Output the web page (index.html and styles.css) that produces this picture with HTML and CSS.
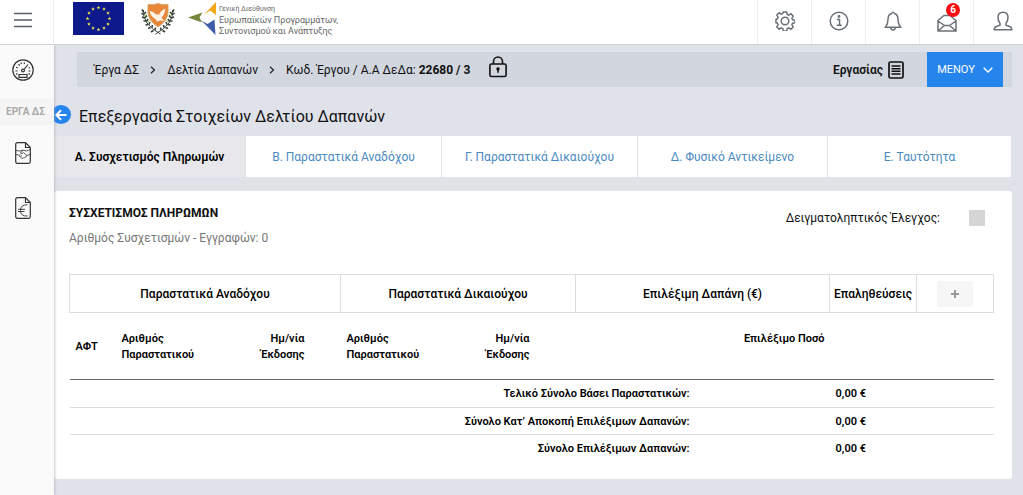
FILE: index.html
```html
<!DOCTYPE html>
<html lang="el">
<head>
<meta charset="utf-8">
<title>Επεξεργασία Στοιχείων Δελτίου Δαπανών</title>
<link rel="stylesheet" href="styles.css">
</head>
<body>
<header class="topbar">
  <button class="burger" aria-label="Μενού πλοήγησης">
    <svg width="18" height="16" viewBox="0 0 18 16"><path d="M0 1.500h18M0 8h18M0 14.500h18" stroke="#5a6068" stroke-width="1.700" fill="none"/></svg>
  </button>
  <div class="brands">
    <svg class="flag" width="51" height="33" viewBox="0 0 51 33">
      <defs><path id="star" fill="#f5ea4b" d="M0-2 .5-.6H1.900L.8.300 1.200 1.700 0 .8-1.200 1.700-.8.300-1.900-.6H-.5z"/></defs>
      <rect width="51" height="33" fill="#0e1a8c"/>
      <use href="#star" x="25.500" y="5.500"/><use href="#star" x="31" y="7"/><use href="#star" x="35" y="11"/>
      <use href="#star" x="36.500" y="16.500"/><use href="#star" x="35" y="22"/><use href="#star" x="31" y="26"/>
      <use href="#star" x="25.500" y="27.500"/><use href="#star" x="20" y="26"/><use href="#star" x="16" y="22"/>
      <use href="#star" x="14.500" y="16.500"/><use href="#star" x="16" y="11"/><use href="#star" x="20" y="7"/>
    </svg>
    <svg class="emblem" width="34" height="33" viewBox="0 0 34 33">
      <path d="M7 1.500Q12 2.500 17 .5 22 2.500 27 1.500V10Q26 18 17 24 8 18 7 10z" fill="#e8873a" stroke="#d5a368" stroke-width="1"/>
      <path d="M8.500 8Q12 8 15 11.500 17 11 18 12 19 8 24.500 5.500 24 11 20.500 14.500L23 18 19 17.500 16 18.500 14.500 16Q10 14 8.500 8z" fill="#fff3e5"/>
      <g fill="none" stroke="#39453b" stroke-width="1">
        <path d="M2.500 7Q1 21 19.500 31M31.500 7Q33 21 14.500 31"/>
        <path stroke-width="1.600" d="M2.500 9 1 6.500M3 12 .5 10M3.500 15 1 14M5 18 2.500 18M7 21.500 4.500 22M9.500 24.500 7 25.500M12.500 27.500 10 29M3 11 5 9M4 15 6 12.500M5.500 18.500 7 16M8 21.500 9 19M11 24.500 11.500 22M14 27 14.500 24.500M31.500 9 33 6.500M31 12 33.500 10M30.500 15 33 14M29 18 31.500 18M27 21.500 29.500 22M24.500 24.500 27 25.500M21.500 27.500 24 29M31 11 29 9M30 15 28 12.500M28.500 18.500 27 16M26 21.500 25 19M23 24.500 22.500 22M20 27 19.500 24.500"/>
      </g>
      <path d="M4 13.500 5.500 11M7 19l1.500-2M30 13.500 28.500 11M27 19l-1.500-2" stroke="#b7c75c" stroke-width="1"/>
    </svg>
    <div class="agency">
      <svg width="29" height="34" viewBox="0 0 29 34">
        <path d="M28 0V13L22 8.500 15.500 13z" fill="#f3a81c"/>
        <path d="M0 15.500 14.500 10.500 11.500 15.500 14 20.500z" fill="#75853c"/>
        <path d="M13.500 18.500 19.500 22 26.500 17.500 27.500 33z" fill="#3d5ba9"/>
      </svg>
      <p class="agency-name"><small>Γενική Διεύθυνση</small><br>Ευρωπαϊκών Προγραμμάτων,<br>Συντονισμού και Ανάπτυξης</p>
    </div>
  </div>
  <nav class="tools" aria-label="Εργαλεία">
    <button class="tool" aria-label="Ρυθμίσεις">
      <svg width="20" height="20" viewBox="0 0 20 20" class="line"><path d="M8.300 1h3.400l.5 2.400 1.600.7 2.100-1.300 2.300 2.300-1.300 2.100.7 1.600 2.400.5v2.400l-2.400.5-.7 1.600 1.300 2.100-2.300 2.300-2.100-1.300-1.600.7-.5 2.400H8.300l-.5-2.400-1.600-.7-2.100 1.300-2.300-2.300 1.300-2.100-.7-1.600L1 11.700V8.300l1.400-.5.700-1.600-1.300-2.100 2.300-2.300 2.100 1.300 1.600-.7z"/><circle cx="10" cy="10" r="3.800"/></svg>
    </button>
    <button class="tool" aria-label="Πληροφορίες">
      <svg width="20" height="20" viewBox="0 0 20 20" class="line"><circle cx="10" cy="10" r="8.800"/><path d="M8 8.500h2.500V14M7.700 14.200h5"/><circle cx="10" cy="5.500" r=".7" fill="#6b7178"/></svg>
    </button>
    <button class="tool" aria-label="Ειδοποιήσεις">
      <svg width="18" height="20" viewBox="0 0 18 20" class="line"><path d="M1.500 16.300Q4 13 4 8.500 4 3.500 7.500 2.500 9-.2 10.500 2.500 14 3.500 14 8.500 14 13 16.500 16.300zM6.800 16.500Q7 19 9 19T11.200 16.500"/></svg>
    </button>
    <button class="tool" aria-label="Μηνύματα">
      <svg width="20" height="18" viewBox="0 0 20 18" class="line mail"><path d="M1 6.500 7 1.500h6l6 5V17H1zM1 7l6.500 4.500h5L19 7M1 17l6.500-5.500M19 17l-6.500-5.500"/></svg>
      <span class="badge">6</span>
    </button>
    <button class="tool" aria-label="Λογαριασμός">
      <svg width="20" height="20" viewBox="0 0 20 20" class="line"><path d="M1.200 18.700q0-2.700 2.800-3.400l3-1v-2Q5 10 5 6.500 5 1.200 10 1.200t5 5.300q0 3.500-2 5.800v2l3 1q2.800.7 2.800 3.400z"/></svg>
    </button>
  </nav>
</header>
<div class="shell">
  <aside class="sidebar">
    <a href="#" class="side-link" aria-label="Πίνακας ελέγχου">
      <svg width="22" height="22" viewBox="0 0 22 22" class="ink"><circle cx="11" cy="11" r="10.200"/><path d="M3.500 12H5.500M4.200 8.200l1.500.7M6.500 5.200l1.200 1.300M9 3.600l.4 1.500M12.500 3.500l-.3 1.500M18.500 12h-2M18 8.500l-1.300.5M4 15.200l1.500-.6M18 15.200l-1.500-.6M12 10.500 16 5.500M7 15.500h8v2.800H7z"/><circle cx="11" cy="11.500" r="1.400"/></svg>
    </a>
    <h2 class="side-title">ΕΡΓΑ ΔΣ</h2>
    <a href="#" class="side-link" aria-label="Συμβάσεις">
      <svg width="16" height="22" viewBox="0 0 16 22" class="ink"><path d="M2.500.7H10.500L15.300 5.500V19.500q0 1.800-1.800 1.800H2.500q-1.800 0-1.800-1.800V2.500Q.7.7 2.500.7zM10.500.7V5.500h4.800"/><path stroke-width=".8" d="M.8 8.500 5 9l3-.8 3.500.8 3.700-1.500M1 12.500l2 .3 3.500 3.200q1.500.7 2-.2 1.500.3 1.800-.8 1.500 0 1.400-1.400L15 12.500M8 8.200 5.500 11q1.500 1.500 3-.5l3.300 3M4 13.500l1.500-1.200M5.500 14.800 7 13.500"/></svg>
    </a>
    <a href="#" class="side-link" aria-label="Δαπάνες">
      <svg width="16" height="22" viewBox="0 0 16 22" class="ink"><path d="M2.500.7H10.500L15.300 5.500V19.500q0 1.800-1.800 1.800H2.500q-1.800 0-1.800-1.800V2.500Q.7.7 2.500.7zM10.500.7V5.500h4.800"/><path stroke-width=".9" d="M12.500 7.800Q5.500 7.500 5.500 13.500T12.500 19M3 12.300h7M3 14.500h6.500"/></svg>
    </a>
  </aside>
  <main class="content">
    <div class="crumbbar">
      <nav class="crumbs" aria-label="Διαδρομή">
        <a href="#">Έργα ΔΣ</a>
        <svg width="6" height="8" viewBox="0 0 6 8"><path d="M1 .8 4.500 4 1 7.200" fill="none" stroke="#222" stroke-width="1.200"/></svg>
        <a href="#">Δελτία Δαπανών</a>
        <svg width="6" height="8" viewBox="0 0 6 8"><path d="M1 .8 4.500 4 1 7.200" fill="none" stroke="#222" stroke-width="1.200"/></svg>
        <span>Κωδ. Έργου / Α.Α ΔεΔα: <b>22680 / 3</b></span>
        <svg class="lock" width="18" height="22" viewBox="0 0 18 22"><rect x=".9" y="8" width="16.200" height="12.500" rx="1.500" fill="none" stroke="#111" stroke-width="1.600"/><path d="M4.500 8V5.500a4.500 4.500 0 0 1 9 0V8" fill="none" stroke="#111" stroke-width="1.600"/><path d="M9 11.200a1.700 1.700 0 0 1 .8 3.200V16.800H8.200V14.400A1.700 1.700 0 0 1 9 11.200z" fill="#111"/></svg>
      </nav>
      <a href="#" class="tasks">Εργασίας
        <svg width="16" height="18" viewBox="0 0 16 18"><rect x="1" y="1" width="14" height="16" rx="1.500" fill="none" stroke="#111" stroke-width="1.700"/><path d="M3.500 5h9M3.500 7.700h9M3.500 10.300h9M3.500 13h9" stroke="#111" stroke-width="1.600"/></svg>
      </a>
      <button class="menu">ΜΕΝΟΥ
        <svg width="10" height="6" viewBox="0 0 10 6"><path d="M.7.8 5 5 9.300.8" fill="none" stroke="#fff" stroke-width="1.400"/></svg>
      </button>
    </div>
    <div class="heading">
      <a href="#" class="back" aria-label="Πίσω"><svg width="12" height="12" viewBox="0 0 12 12"><path d="M11.500 6H1.500M6 1.300 1.300 6 6 10.700" fill="none" stroke="#fff" stroke-width="2"/></svg></a>
      <h1>Επεξεργασία Στοιχείων Δελτίου Δαπανών</h1>
    </div>
    <nav class="tabs" aria-label="Καρτέλες">
      <a href="#" class="tab active" aria-current="page">Α. Συσχετισμός Πληρωμών</a>
      <a href="#" class="tab">Β. Παραστατικά Αναδόχου</a>
      <a href="#" class="tab">Γ. Παραστατικά Δικαιούχου</a>
      <a href="#" class="tab">Δ. Φυσικό Αντικείμενο</a>
      <a href="#" class="tab">Ε. Ταυτότητα</a>
    </nav>
    <section class="card">
      <div class="card-head">
        <div>
          <h2>ΣΥΣΧΕΤΙΣΜΟΣ ΠΛΗΡΩΜΩΝ</h2>
          <p>Αριθμός Συσχετισμών - Εγγραφών: 0</p>
        </div>
        <div class="check">
          <label for="sample">Δειγματοληπτικός Έλεγχος:</label>
          <input type="checkbox" id="sample" disabled>
        </div>
      </div>
      <table class="grid">
        <colgroup><col class="c-aft"><col class="c-num"><col class="c-date"><col class="c-gap"><col class="c-num"><col class="c-date"><col class="c-gap2"><col class="c-sum"><col class="c-amount"><col class="c-ver"><col class="c-add"></colgroup>
        <thead>
          <tr class="groups">
            <th colspan="4">Παραστατικά Αναδόχου</th>
            <th colspan="3">Παραστατικά Δικαιούχου</th>
            <th colspan="2">Επιλέξιμη Δαπάνη (€)</th>
            <th>Επαληθεύσεις</th>
            <th><button class="add" aria-label="Προσθήκη"><svg width="8" height="8" viewBox="0 0 8 8"><path d="M4 0v8M0 4h8" stroke="#999" stroke-width="2"/></svg></button></th>
          </tr>
          <tr class="fields">
            <th class="mid">ΑΦΤ</th>
            <th>Αριθμός Παραστατικού</th>
            <th class="num">Ημ/νία Έκδοσης</th>
            <th></th>
            <th>Αριθμός Παραστατικού</th>
            <th class="num">Ημ/νία Έκδοσης</th>
            <th></th>
            <th></th>
            <th class="num">Επιλέξιμο Ποσό</th>
            <th></th>
            <th></th>
          </tr>
        </thead>
        <tbody>
          <tr><th colspan="8" scope="row">Τελικό Σύνολο Βάσει Παραστατικών:</th><td></td><td>0,00 €</td><td></td></tr>
          <tr><th colspan="8" scope="row">Σύνολο Κατ’ Αποκοπή Επιλέξιμων Δαπανών:</th><td></td><td>0,00 €</td><td></td></tr>
          <tr><th colspan="8" scope="row">Σύνολο Επιλέξιμων Δαπανών:</th><td></td><td>0,00 €</td><td></td></tr>
        </tbody>
      </table>
    </section>
  </main>
</div>
</body>
</html>
```
FILE: styles.css
```css
* { box-sizing: border-box; }
body { margin: 0; min-height: 100vh; display: flex; flex-direction: column; background: #e0e2ea; color: #111; font: 12px/16px Roboto, "Noto Sans", sans-serif; }
a { color: inherit; text-decoration: none; }
button { font: inherit; border: 0; padding: 0; background: none; cursor: pointer; }
h1, h2, p { margin: 0; }
svg { display: block; flex: none; }

.topbar { display: flex; height: 45px; background: #fff; border-bottom: 1px solid #cdcfd4; overflow: hidden; }
.burger { flex: none; width: 54px; padding: 0 14px 5px; border-right: 1px solid #eee; display: flex; align-items: center; }
.brands { display: flex; align-items: flex-start; flex: 1; padding: 2px 0 0 19px; }
.emblem { margin: 1px 0 0 17px; }
.agency { display: flex; gap: 2px; margin-left: 13px; }
.agency-name { padding-top: 1px; color: #666; font-size: 9px; line-height: 11px; white-space: nowrap; }
.agency-name small { font-size: 7px; }
.tools { display: flex; }
.tool { position: relative; width: 54px; padding-bottom: 2px; border-left: 1px solid #eee; display: flex; align-items: center; justify-content: center; }
.tool:last-child { width: 50px; padding-left: 8px; }
.line { fill: none; stroke: #6b7178; stroke-width: 1.5; }
.mail { margin-top: 4px; }
.badge { position: absolute; top: 3px; left: 26px; width: 14px; height: 14px; border-radius: 50%; background: #f80c12; color: #fff; font-size: 10px; line-height: 14px; font-weight: 700; text-align: center; }

.shell { flex: 1; display: flex; }
.sidebar { position: relative; z-index: 1; flex: none; width: 54px; background: #fafafa; box-shadow: 0 0 3px #9a9ea8; clip-path: inset(0 -4px 0 0); }
.side-link { display: flex; justify-content: center; align-items: center; height: 55px; padding-right: 8px; }
.side-link:first-child { height: 50px; }
.side-title { margin-top: 3px; padding: 5px 0 5px 6px; background: #f5f5f5; color: #aaa; font-size: 10px; line-height: 17px; font-weight: 700; white-space: nowrap; }
.ink { fill: none; stroke: #333; stroke-width: 1.2; }

.content { flex: 1; min-width: 0; padding: 7px 11px 16px 0; }
.crumbbar { display: flex; align-items: center; height: 35px; margin-left: 23px; padding: 0 9px 0 17px; background: #d2d6df; }
.crumbs { display: flex; align-items: center; gap: 11px; flex: 1; padding-top: 1px; white-space: nowrap; }
.lock { margin: 0 0 7px 8px; }
.tasks { display: flex; align-items: center; gap: 5px; margin-right: 23px; padding-top: 1px; font-weight: 600; }
.menu { display: flex; align-items: center; justify-content: center; gap: 8px; width: 76px; height: 35px; background: #2684ed; color: #fff; font-size: 11px; }
.heading { display: flex; align-items: center; gap: 8px; height: 49px; padding-top: 10px; }
.back { display: flex; align-items: center; justify-content: center; width: 20px; height: 19px; margin: 0 0 4px -3px; border-radius: 50%; background: #2684ed; }
h1 { font-size: 16px; line-height: 24px; font-weight: 400; }

.tabs { display: grid; grid-template-columns: 192fr 196fr 196fr 190fr 184fr; }
.tab { height: 41px; line-height: 43px; text-align: center; background: #fff; color: #4a8ac0; border-right: 1px solid #e0e2e6; white-space: nowrap; }
.tab.active { background: #e8e8ec; color: #000; font-weight: 600; }
.card { margin-top: 14px; padding: 14px 19px 17px 15px; background: #fff; border-radius: 3px; }
.card-head { display: flex; justify-content: space-between; height: 69px; }
.card-head h2 { font-size: 12px; line-height: 16px; font-weight: 700; }
.card-head p { margin-top: 9px; color: #777; }
.check { display: flex; align-items: center; gap: 29px; height: 25px; padding-right: 8px; }
.check input { appearance: none; width: 16px; height: 16px; margin: 0; background: #d5d5d5; }

.grid { width: 100%; table-layout: fixed; border-collapse: collapse; color: #000; font-size: 11px; line-height: 16px; }
.grid th, .grid td { padding: 1px 6px 0; text-align: left; font-weight: 600; }
.grid .groups th { height: 38px; padding: 1px 0 0; border: 1px solid #ddd; text-align: center; font-size: 12px; font-weight: 500; }
.grid .fields th { height: 67px; padding-top: 18px; vertical-align: top; }
.grid .fields .mid { padding: 2px 6px 0; vertical-align: middle; }
.grid .fields .num { padding-right: 5px; text-align: right; }
.grid tbody tr { height: 27px; border-top: 1px solid #ddd; }
.grid tbody tr:first-child { height: 28px; border-top: 1px solid #666; }
.grid tbody th { text-align: right; }
.c-aft { width: 46px; }
.c-num { width: 109px; }
.c-date { width: 85px; }
.c-gap { width: 31px; }
.c-gap2 { width: 41px; }
.c-sum { width: 120px; }
.c-amount { width: 134px; }
.c-ver { width: 87px; }
.c-add { width: 77px; }
.add { display: flex; align-items: center; justify-content: center; width: 36px; height: 26px; margin: 0 auto; background: #f6f6f6; border-radius: 2px; }
```
